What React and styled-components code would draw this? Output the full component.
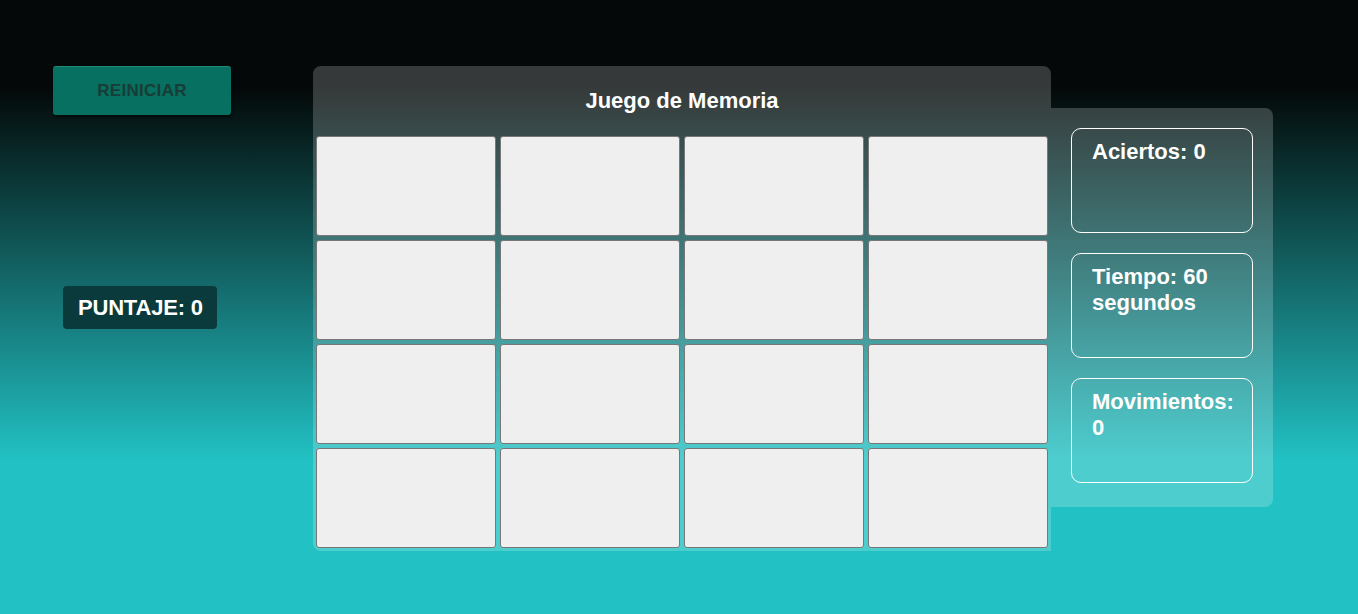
import React from 'react'
import styled, { createGlobalStyle } from 'styled-components'

const GlobalStyle = createGlobalStyle`
  html, body {
    margin: 0;
    padding: 0;
  }
  body {
    font-family: "Liberation Sans", Arial, sans-serif;
  }
`

const Page = styled.div`
  min-height: 614px;
  box-sizing: border-box;
  padding: 66px 0 0 53px;
  display: flex;
  align-items: flex-start;
  background: linear-gradient(to bottom, #040808 0px, #040808 88px, #22c1c3 460px, #22c1c3 100%);
`

const LeftColumn = styled.div`
  width: 178px;
  margin-right: 82px;
  display: flex;
  flex-direction: column;
  align-items: flex-start;
`

const ResetButton = styled.button`
  width: 178px;
  height: 49px;
  border: none;
  border-top: 1px solid #1f8a78;
  border-radius: 3px;
  background: #077060;
  color: #173d37;
  font-family: "Liberation Sans", Arial, sans-serif;
  font-weight: bold;
  font-size: 17px;
  letter-spacing: 0.3px;
  box-shadow: 1px 2px 3px rgba(0, 0, 0, 0.6);
  cursor: pointer;
`

const Score = styled.div`
  margin: 171px 0 0 10px;
  padding: 0 14px 0 15px;
  height: 43px;
  display: flex;
  align-items: center;
  background: #0a3a3b;
  border-radius: 4px;
  color: #fff;
  font-weight: bold;
  font-size: 22px;
  letter-spacing: -0.2px;
`

const Board = styled.div`
  width: 738px;
  box-sizing: border-box;
  padding: 0 3px 3px 3px;
  border-radius: 8px 8px 0 8px;
  background: rgba(255, 255, 255, 0.2);
`

const Title = styled.h1`
  margin: 0;
  height: 70px;
  display: flex;
  align-items: center;
  justify-content: center;
  color: #fff;
  font-size: 22px;
  font-weight: bold;
`

const Grid = styled.div`
  display: grid;
  grid-template-columns: repeat(4, 180px);
  grid-auto-rows: 100px;
  gap: 4px;
`

const Card = styled.div`
  background: #efefef;
  border: 1px solid #777;
  border-radius: 3px;
`

const Side = styled.div`
  margin-top: 42px;
  width: 222px;
  box-sizing: border-box;
  padding: 20px 20px 24px 20px;
  display: flex;
  flex-direction: column;
  gap: 20px;
  border-radius: 0 8px 8px 0;
  background: rgba(255, 255, 255, 0.2);
`

const Stat = styled.div`
  height: 105px;
  box-sizing: border-box;
  padding: 10px 16px 0 20px;
  border: 1px solid #fff;
  border-radius: 10px;
  color: #fff;
  font-weight: bold;
  font-size: 22px;
  line-height: 26px;
`

const App = () => {
  const cards = Array.from({ length: 16 })
  return (
    <Page>
      <GlobalStyle />
      <LeftColumn>
        <ResetButton>REINICIAR</ResetButton>
        <Score>PUNTAJE: 0</Score>
      </LeftColumn>
      <Board>
        <Title>Juego de Memoria</Title>
        <Grid>
          {cards.map((_, i) => (
            <Card key={i} />
          ))}
        </Grid>
      </Board>
      <Side>
        <Stat>Aciertos: 0</Stat>
        <Stat>Tiempo: 60 segundos</Stat>
        <Stat>Movimientos: 0</Stat>
      </Side>
    </Page>
  )
}

export default App
